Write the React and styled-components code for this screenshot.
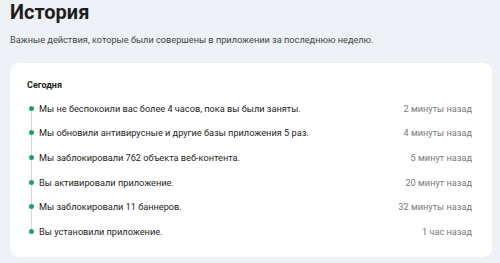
import styled, { createGlobalStyle } from 'styled-components';

const GlobalStyle = createGlobalStyle`
    html, body {
        margin: 0;
        padding: 0;
        background: #eef1f6;
        font-family: Roboto, "Noto Sans", sans-serif;
        color: #1d1d1b;
    }
`;

const events = [
    { text: 'Мы не беспокоили вас более 4 часов, пока вы были заняты.', time: '2 минуты назад' },
    { text: 'Мы обновили антивирусные и другие базы приложения 5 раз.', time: '4 минуты назад' },
    { text: 'Мы заблокировали 762 объекта веб-контента.', time: '5 минут назад' },
    { text: 'Вы активировали приложение.', time: '20 минут назад' },
    { text: 'Мы заблокировали 11 баннеров.', time: '32 минуты назад' },
    { text: 'Вы установили приложение.', time: '1 час назад' },
];

const App = () => {
    return (
        <>
            <GlobalStyle />
            <Page>
                <Title>История</Title>
                <Subtitle>Важные действия, которые были совершены в приложении за последнюю неделю.</Subtitle>
                <Card>
                    <DayTitle>Сегодня</DayTitle>
                    <Timeline>
                        {events.map((ev, i) => (
                            <Row key={i} $first={i === 0} $last={i === events.length - 1}>
                                <Dot />
                                <RowText>{ev.text}</RowText>
                                <RowTime>{ev.time}</RowTime>
                            </Row>
                        ))}
                    </Timeline>
                </Card>
            </Page>
        </>
    );
};

export default App;

const Page = styled.div`
    padding: 0 8px 6px 10px;
    height: 263px;
    box-sizing: border-box;
    display: flex;
    flex-direction: column;
`;

const Title = styled.h1`
    margin: 0;
    font-size: 20px;
    line-height: 24px;
    font-weight: 700;
`;

const Subtitle = styled.p`
    margin: 10px 0 0;
    font-size: 9.2px;
    line-height: 12px;
    color: #444;
`;

const Card = styled.div`
    margin-top: 17px;
    flex: 1;
    background: #fff;
    border-radius: 9px;
    padding: 16px 20px 10px 17px;
`;

const DayTitle = styled.div`
    font-size: 9px;
    font-weight: 700;
    line-height: 12px;
`;

const Timeline = styled.div`
    margin-top: 5px;
    display: flex;
    flex-direction: column;
`;

const Row = styled.div`
    position: relative;
    display: flex;
    align-items: center;
    height: 24.6px;
    padding-left: 12px;

    &::before {
        content: '';
        position: absolute;
        left: 4px;
        width: 1px;
        background: #d3d6db;
        top: ${(p) => (p.$first ? '50%' : '0')};
        bottom: ${(p) => (p.$last ? '50%' : '0')};
    }
`;

const Dot = styled.span`
    position: absolute;
    left: 2px;
    top: 50%;
    width: 5px;
    height: 5px;
    margin-top: -2.5px;
    border-radius: 50%;
    background: #1b9e7e;
`;

const RowText = styled.span`
    flex: 1;
    font-size: 9.2px;
    color: #1d1d1b;
`;

const RowTime = styled.span`
    font-size: 9.2px;
    color: #77797c;
`;
